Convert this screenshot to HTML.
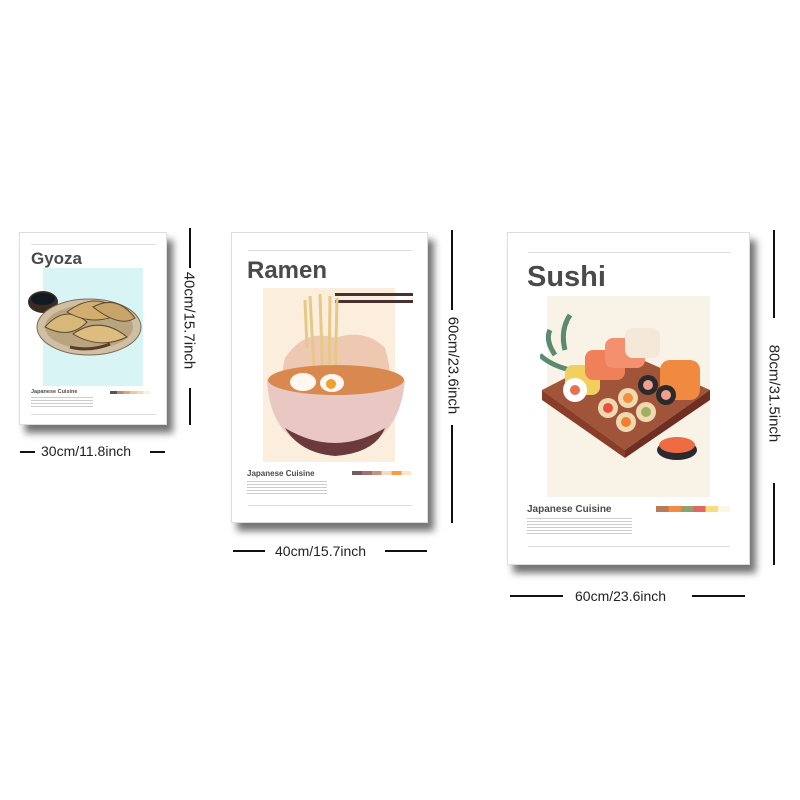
<!DOCTYPE html>
<html><head><meta charset="utf-8"><style>
*{margin:0;padding:0;box-sizing:border-box}
body{width:800px;height:800px;background:#fff;position:relative;overflow:hidden;font-family:"Liberation Sans",Arial,sans-serif;color:#444}
.a{position:absolute}
.p{position:absolute;background:#fff;border:1px solid #ddd;box-shadow:6px 8px 7px rgba(0,0,0,.55)}
.hl{position:absolute;height:1px;background:#ddd}
.t{position:absolute;font-weight:bold;color:#4a4a4a;line-height:1}
.jc{position:absolute;font-weight:bold;color:#4a4a4a;line-height:1}
.bl{position:absolute;background:#111}
.lab{position:absolute;font-size:14px;color:#222;white-space:nowrap;line-height:1}
.vl{position:absolute;font-size:15px;color:#222;white-space:nowrap;line-height:1;transform:rotate(90deg);transform-origin:center}
.tx{position:absolute;background:repeating-linear-gradient(#ccc 0 1px,transparent 1px 3px)}
</style></head><body>

<!-- Gyoza -->
<div class="p" style="left:19px;top:232px;width:148px;height:193px"></div>
<div class="hl" style="left:31px;top:244px;width:125px"></div>
<div class="t" style="left:31px;top:250px;font-size:17px">Gyoza</div>
<div class="a" style="left:43px;top:268px;width:100px;height:118px;background:#d9f4f5"></div>
<svg class="a" style="left:25px;top:282px" width="125" height="80">
<ellipse cx="18" cy="20" rx="15" ry="11" fill="#3a2a22"/><ellipse cx="18" cy="17" rx="12" ry="6" fill="#111a22"/>
<ellipse cx="64" cy="45" rx="52" ry="28" fill="#cfc0a4" stroke="#7a6a56"/>
<ellipse cx="64" cy="45" rx="44" ry="22" fill="#b9a480"/>
<path d="M20 45 Q40 22 62 40 Q45 58 20 45Z" fill="#d8b878" stroke="#5d4a30"/>
<path d="M42 30 Q70 8 98 30 Q70 46 42 30Z" fill="#d1ae70" stroke="#5d4a30"/>
<path d="M48 52 Q75 33 102 55 Q75 68 48 52Z" fill="#ddbc80" stroke="#5d4a30"/>
<path d="M68 25 Q92 12 110 36 Q95 46 68 25Z" fill="#c9a468" stroke="#5d4a30"/>
<path d="M45 65 Q65 70 85 62" stroke="#5a3a2a" stroke-width="3" fill="none"/>
</svg>
<div class="jc" style="left:31px;top:390px;font-size:5.5px">Japanese Cuisine</div>
<div class="tx" style="left:31px;top:397px;width:62px;height:11px"></div>
<div class="a" style="left:110px;top:391px;width:40px;height:3px;background:linear-gradient(90deg,#555 0 17%,#b98a6a 17% 34%,#d8a87a 34% 50%,#e8c9a0 50% 67%,#f2dcbc 67% 84%,#faf0e0 84%)"></div>
<div class="hl" style="left:31px;top:414px;width:125px"></div>

<div class="bl" style="left:189px;top:228px;width:2px;height:40px"></div>
<div class="vl" style="left:138px;top:313px;width:102px;text-align:center">40cm/15.7inch</div>
<div class="bl" style="left:189px;top:388px;width:2px;height:37px"></div>
<div class="bl" style="left:20px;top:451px;width:15px;height:2px"></div>
<div class="lab" style="left:41px;top:444px">30cm/11.8inch</div>
<div class="bl" style="left:150px;top:451px;width:15px;height:2px"></div>

<!-- Ramen -->
<div class="p" style="left:231px;top:232px;width:197px;height:291px"></div>
<div class="hl" style="left:248px;top:250px;width:164px"></div>
<div class="t" style="left:247px;top:259px;font-size:24px">Ramen</div>
<div class="a" style="left:263px;top:288px;width:132px;height:174px;background:#fbeedc"></div>
<svg class="a" style="left:255px;top:288px" width="160" height="175">
<path d="M30 70 Q20 110 40 150 L120 150 Q145 110 130 60 Q110 40 80 50 Q50 40 30 70Z" fill="#eab8a0" opacity=".7"/>
<rect x="80" y="5" width="78" height="3" fill="#4a3030"/><rect x="80" y="12" width="78" height="3" fill="#4a3030"/>
<path d="M55 8 L60 100 M65 6 L68 100 M75 8 L74 100 M82 10 L80 100 M50 12 L52 60" stroke="#e8c888" stroke-width="3"/>
<path d="M12 92 Q80 82 150 92 Q145 150 100 160 L60 160 Q15 150 12 92Z" fill="#e9c8c4"/>
<path d="M30 140 Q80 170 130 140 Q120 165 80 168 Q45 165 30 140Z" fill="#6b3a3a"/>
<ellipse cx="81" cy="92" rx="68" ry="15" fill="#d98850"/>
<ellipse cx="48" cy="94" rx="13" ry="9" fill="#fff8f0"/>
<ellipse cx="77" cy="95" rx="12" ry="9" fill="#fff8f0"/><circle cx="76" cy="96" r="5" fill="#f0a030"/>
</svg>
<div class="jc" style="left:247px;top:470px;font-size:8px">Japanese Cuisine</div>
<div class="tx" style="left:247px;top:481px;width:80px;height:15px"></div>
<div class="a" style="left:352px;top:471px;width:59px;height:4px;background:linear-gradient(90deg,#7a5a62 0 17%,#a07070 17% 34%,#c89080 34% 50%,#f6dcc8 50% 67%,#f5a040 67% 84%,#fae6cc 84%)"></div>
<div class="hl" style="left:248px;top:505px;width:164px"></div>

<div class="bl" style="left:451px;top:230px;width:2px;height:80px"></div>
<div class="vl" style="left:401px;top:358px;width:104px;text-align:center">60cm/23.6inch</div>
<div class="bl" style="left:451px;top:425px;width:2px;height:98px"></div>
<div class="bl" style="left:233px;top:550px;width:32px;height:2px"></div>
<div class="lab" style="left:275px;top:544px">40cm/15.7inch</div>
<div class="bl" style="left:385px;top:550px;width:42px;height:2px"></div>

<!-- Sushi -->
<div class="p" style="left:507px;top:232px;width:243px;height:333px"></div>
<div class="hl" style="left:528px;top:252px;width:202px"></div>
<div class="t" style="left:527px;top:263px;font-size:29px">Sushi</div>
<div class="a" style="left:547px;top:296px;width:163px;height:201px;background:#f8f3e6"></div>
<svg class="a" style="left:540px;top:310px" width="170" height="160">
<path d="M15 45 Q5 30 10 20 M25 40 Q20 20 30 5 M30 60 Q10 55 0 45" stroke="#5a8a70" stroke-width="5" fill="none"/>
<path d="M2 80 L80 40 L170 80 L85 140Z" fill="#a0543a"/>
<path d="M2 80 L85 140 L85 148 L2 90Z" fill="#8a3e2a"/><path d="M85 140 L170 80 L170 90 L85 148Z" fill="#6e2e22"/>
<rect x="25" y="55" width="35" height="30" rx="8" fill="#f2d060"/><circle cx="35" cy="80" r="12" fill="#fff"/><circle cx="35" cy="80" r="5" fill="#e87050"/>
<rect x="45" y="40" width="40" height="30" rx="8" fill="#f08058"/>
<rect x="65" y="28" width="40" height="30" rx="8" fill="#f39070"/>
<rect x="85" y="18" width="35" height="30" rx="8" fill="#f4e8d8"/>
<rect x="120" y="50" width="40" height="40" rx="10" fill="#f08a40"/>
<circle cx="68" cy="98" r="10" fill="#f0d8b0"/><circle cx="68" cy="98" r="5" fill="#e85040"/>
<circle cx="88" cy="88" r="10" fill="#f0d8b0"/><circle cx="88" cy="88" r="5" fill="#f09040"/>
<circle cx="86" cy="112" r="10" fill="#f0d8b0"/><circle cx="86" cy="112" r="5" fill="#f08030"/>
<circle cx="106" cy="102" r="10" fill="#f0d8b0"/><circle cx="106" cy="102" r="5" fill="#a0b060"/>
<circle cx="108" cy="75" r="10" fill="#2a2a2a"/><circle cx="108" cy="75" r="5" fill="#f0a090"/>
<circle cx="126" cy="85" r="10" fill="#2a2a2a"/><circle cx="126" cy="85" r="5" fill="#f0a090"/>
<ellipse cx="137" cy="140" rx="20" ry="10" fill="#2a2a30"/><ellipse cx="137" cy="135" rx="18" ry="8" fill="#ee6a40"/>
</svg>
<div class="jc" style="left:527px;top:505px;font-size:10px">Japanese Cuisine</div>
<div class="tx" style="left:527px;top:518px;width:105px;height:18px"></div>
<div class="a" style="left:656px;top:506px;width:74px;height:6px;background:linear-gradient(90deg,#b97a58 0 17%,#f08c48 17% 34%,#90a070 34% 50%,#e06860 50% 67%,#f8dc80 67% 84%,#fbf6e6 84%)"></div>
<div class="hl" style="left:528px;top:546px;width:202px"></div>

<div class="bl" style="left:773px;top:230px;width:2px;height:88px"></div>
<div class="vl" style="left:722px;top:386px;width:104px;text-align:center">80cm/31.5inch</div>
<div class="bl" style="left:773px;top:483px;width:2px;height:82px"></div>
<div class="bl" style="left:510px;top:595px;width:53px;height:2px"></div>
<div class="lab" style="left:575px;top:589px">60cm/23.6inch</div>
<div class="bl" style="left:692px;top:595px;width:53px;height:2px"></div>
</body></html>
